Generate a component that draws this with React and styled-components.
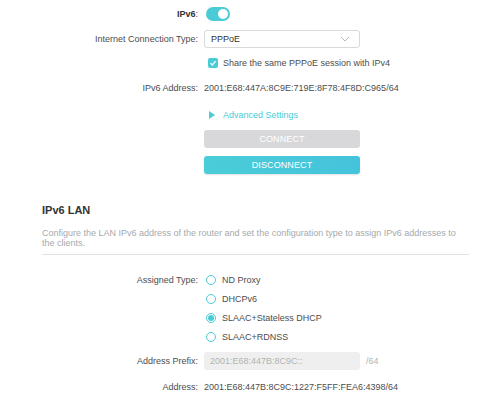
import React from 'react'
import styled, { createGlobalStyle } from 'styled-components'

const GlobalStyle = createGlobalStyle`
  html, body {
    margin: 0;
    padding: 0;
    background: #fff;
  }
  body {
    font-family: "Liberation Sans", Arial, sans-serif;
    font-size: 9px;
    color: #4d4d4d;
  }
`

const Page = styled.div`
  width: 500px;
  height: 415px;
  overflow: hidden;
  display: flex;
  flex-direction: column;
`

const Form = styled.div`
  display: flex;
  flex-direction: column;
  padding-top: 4px;
`

const Row = styled.div`
  display: grid;
  grid-template-columns: 198px 1fr;
  column-gap: 6px;
  align-items: center;
  height: ${p => p.$h || 20}px;
  margin-top: ${p => p.$mt || 0}px;
`

const Label = styled.div`
  text-align: right;
  white-space: nowrap;
  color: #4d4d4d;
`

const Bold = styled.span`
  font-weight: bold;
  color: #333;
`

const Value = styled.div`
  display: flex;
  align-items: center;
  white-space: nowrap;
  color: #4d4d4d;
`

const Toggle = styled.div`
  width: 24px;
  height: 14px;
  border-radius: 7px;
  background: #4acbd6;
  margin-left: 2px;
  display: flex;
  align-items: center;
  justify-content: flex-end;
  padding: 0 2px;
  box-sizing: border-box;
`

const Knob = styled.div`
  width: 10px;
  height: 10px;
  border-radius: 50%;
  background: #fff;
`

const Select = styled.div`
  width: 156px;
  height: 18px;
  box-sizing: border-box;
  border: 1px solid #d9d9d9;
  border-radius: 3px;
  display: flex;
  align-items: center;
  justify-content: space-between;
  padding: 0 9px 0 6px;
  color: #333;
`

const Check = styled.div`
  width: 10px;
  height: 10px;
  border-radius: 2px;
  background: #4acbd6;
  margin-left: 4px;
  margin-right: 5px;
  display: flex;
  align-items: center;
  justify-content: center;
`

const LinkText = styled.span`
  color: #4acbd6;
`

const Arrow = styled.span`
  width: 0;
  height: 0;
  border-top: 4px solid transparent;
  border-bottom: 4px solid transparent;
  border-left: 6px solid #4acbd6;
  margin-left: 5px;
  margin-right: 8px;
`

const Button = styled.div`
  width: 156px;
  height: ${p => p.$h || 18}px;
  border-radius: 3px;
  display: flex;
  align-items: center;
  justify-content: center;
  color: #fff;
  font-size: 9px;
  letter-spacing: 0.1px;
  background: ${p => (p.$primary ? 'linear-gradient(90deg, #4bcdd8, #45c3dc)' : '#d8d8da')};
  box-shadow: ${p => (p.$primary ? '0 1px 2px rgba(0,0,0,0.12)' : 'none')};
`

const Section = styled.div`
  padding: 0 31px 0 42px;
  margin-top: 29px;
`

const Heading = styled.div`
  font-weight: bold;
  font-size: 11px;
  color: #333;
  height: 14px;
  line-height: 14px;
`

const Desc = styled.div`
  margin-top: 11px;
  color: #a7a9ac;
  line-height: 10px;
  padding-bottom: 6px;
  border-bottom: 1px solid #e2e2e2;
`

const Radio = styled.div`
  width: 10px;
  height: 10px;
  border-radius: 50%;
  border: 1px solid #4acbd6;
  margin-left: 2px;
  margin-right: 6px;
  display: flex;
  align-items: center;
  justify-content: center;
  box-sizing: border-box;
  &::after {
    content: '';
    width: 6px;
    height: 6px;
    border-radius: 50%;
    background: ${p => (p.$on ? '#4acbd6' : 'transparent')};
  }
`

const Input = styled.div`
  width: 156px;
  height: 18px;
  box-sizing: border-box;
  border-radius: 3px;
  background: #efefef;
  display: flex;
  align-items: center;
  padding-left: 6px;
  color: #b3b3b3;
`

const Suffix = styled.span`
  color: #b3b3b3;
  margin-left: 6px;
`

function Chevron() {
  return (
    <svg width="10" height="6" viewBox="0 0 10 6">
      <path d="M1 1 L5 5 L9 1" fill="none" stroke="#b8b8b8" strokeWidth="1" />
    </svg>
  )
}

function Tick() {
  return (
    <svg width="8" height="8" viewBox="0 0 8 8">
      <path d="M1.5 4.2 L3.3 6 L6.6 2.2" fill="none" stroke="#fff" strokeWidth="1.2" />
    </svg>
  )
}

const types = ['ND Proxy', 'DHCPv6', 'SLAAC+Stateless DHCP', 'SLAAC+RDNSS']

export default function App() {
  return (
    <Page>
      <GlobalStyle />
      <Form>
        <Row>
          <Label><Bold>IPv6</Bold>:</Label>
          <Value><Toggle><Knob /></Toggle></Value>
        </Row>
        <Row $mt={5}>
          <Label>Internet Connection Type:</Label>
          <Value>
            <Select>
              <span>PPPoE</span>
              <Chevron />
            </Select>
          </Value>
        </Row>
        <Row $mt={4}>
          <Label />
          <Value>
            <Check><Tick /></Check>
            Share the same PPPoE session with IPv4
          </Value>
        </Row>
        <Row $mt={5}>
          <Label>IPv6 Address:</Label>
          <Value>2001:E68:447A:8C9E:719E:8F78:4F8D:C965/64</Value>
        </Row>
        <Row $mt={7}>
          <Label />
          <Value>
            <Arrow />
            <LinkText>Advanced Settings</LinkText>
          </Value>
        </Row>
        <Row $mt={5} $h={18}>
          <Label />
          <Button>CONNECT</Button>
        </Row>
        <Row $mt={8} $h={18}>
          <Label />
          <Button $primary>DISCONNECT</Button>
        </Row>
      </Form>

      <Section>
        <Heading>IPv6 LAN</Heading>
        <Desc>
          Configure the LAN IPv6 address of the router and set the configuration type to assign IPv6 addresses to the clients.
        </Desc>
      </Section>

      <Form>
        <Row $mt={11} $h={19}>
          <Label>Assigned Type:</Label>
          <Value><Radio />{types[0]}</Value>
        </Row>
        {types.slice(1).map(t => (
          <Row key={t} $h={19}>
            <Label />
            <Value><Radio $on={t === 'SLAAC+Stateless DHCP'} />{t}</Value>
          </Row>
        ))}
        <Row $mt={6} $h={18}>
          <Label>Address Prefix:</Label>
          <Value>
            <Input>2001:E68:447B:8C9C::</Input>
            <Suffix>/64</Suffix>
          </Value>
        </Row>
        <Row $mt={7} $h={20}>
          <Label>Address:</Label>
          <Value>2001:E68:447B:8C9C:1227:F5FF:FEA6:4398/64</Value>
        </Row>
      </Form>
    </Page>
  )
}
